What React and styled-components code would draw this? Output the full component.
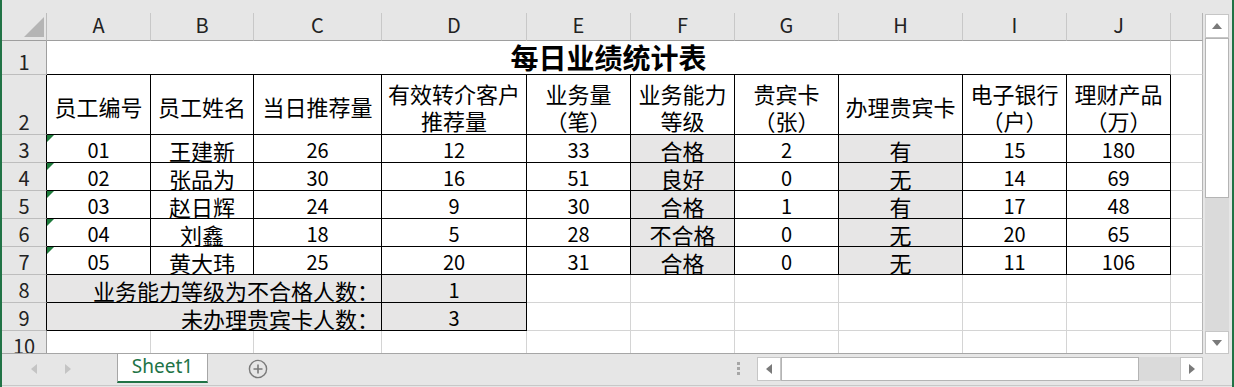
import React from "react";
import styled, { createGlobalStyle, css } from "styled-components";

const GREEN = "#217346";
const GRID = "#d4d4d4";
const FILL = "#e7e6e6";
const BLACK = "#000";
const EDGE = "#b4b4b4";

const GlobalStyle = createGlobalStyle`
  html, body {
    margin: 0;
    padding: 0;
    background: #e6e6e6;
  }
  body {
    font-family: "Noto Sans CJK SC", "Noto Sans", sans-serif;
  }
`;

const Window = styled.div`
  width: 1234px;
  height: 387px;
  box-sizing: border-box;
  border-left: 2px solid ${GREEN};
  border-right: 2px solid ${GREEN};
  background: #e6e6e6;
  display: flex;
  flex-direction: column;
  padding-top: 13px;
  overflow: hidden;
`;

const Main = styled.div`
  display: flex;
`;

const LeftPane = styled.div`
  width: 1201px;
  display: flex;
  flex-direction: column;
`;

const Sheet = styled.div`
  display: grid;
  grid-template-columns: 45px 104px 103px 128px 145px 104px 104px 104px 124px 104px 104px 32px;
  grid-template-rows: 28px 34px 60px repeat(8, 28px);
  height: 340px;
  overflow: hidden;
  background: #fff;
  font-family: "Noto Sans CJK SC", sans-serif;
  color: ${BLACK};
`;

const Corner = styled.div`
  background: #e6e6e6;
  border-right: 1px solid #bcbcbc;
  border-bottom: 1px solid #9e9e9e;
  display: flex;
  justify-content: flex-end;
  align-items: flex-end;
  padding: 0 2px 3px 0;
`;

const ColHead = styled.div`
  background: #e6e6e6;
  border-right: 1px solid ${(p) => p.$edge || "#c8c8c8"};
  border-bottom: 1px solid #9e9e9e;
  display: flex;
  justify-content: center;
  align-items: center;
  padding-bottom: 4px;
  font-size: 20px;
  line-height: 23px;
  color: #222;
`;

const RowHead = styled.div`
  background: #e6e6e6;
  border-right: 1px solid ${(p) => p.$edge};
  border-bottom: 1px solid #bdbdbd;
  display: flex;
  justify-content: center;
  align-items: flex-end;
  font-size: 20px;
  line-height: 24px;
  color: #222;
`;

const Cell = styled.div`
  position: relative;
  grid-column: ${(p) => (p.$span ? `span ${p.$span}` : "auto")};
  background: ${(p) => (p.$fill ? FILL : "#fff")};
  border-right: 1px solid ${(p) => p.$r || GRID};
  border-bottom: 1px solid ${(p) => p.$b || GRID};
  display: flex;
  align-items: flex-end;
  justify-content: ${(p) => (p.$right ? "flex-end" : "center")};
  padding-right: ${(p) => (p.$right ? "2px" : "0")};
  font-size: ${(p) => (p.$num ? "20px" : "22px")};
  line-height: 24px;
  white-space: nowrap;
  ${(p) =>
    p.$flag &&
    css`
      &::before {
        content: "";
        position: absolute;
        top: 0;
        left: 0;
        border-top: 7px solid #1e7b3c;
        border-right: 7px solid transparent;
      }
    `}
`;

const HeadCell = styled(Cell)`
  align-items: center;
  padding-top: 4px;
  line-height: 27px;
  text-align: center;
`;

const TitleCell = styled(Cell)`
  font-size: 28px;
  font-weight: 700;
  line-height: 34px;
`;

const TabBar = styled.div`
  height: 30px;
  box-sizing: border-box;
  border-top: 1px solid #a6a6a6;
  display: flex;
  align-items: stretch;
`;

const Nav = styled.div`
  width: 115px;
  display: flex;
  align-items: center;
  padding-left: 29px;
  gap: 28px;
  box-sizing: border-box;
`;

const Tab = styled.div`
  width: 91px;
  box-sizing: border-box;
  background: #fff;
  border-left: 1px solid #a6a6a6;
  border-right: 1px solid #a6a6a6;
  border-bottom: 2px solid ${GREEN};
  display: flex;
  align-items: center;
  justify-content: center;
  padding-bottom: 4px;
  font-family: "Noto Sans", sans-serif;
  font-size: 19px;
  color: ${GREEN};
`;

const AddBtn = styled.div`
  margin-left: 40px;
  display: flex;
  align-items: center;
`;

const Spacer = styled.div`
  flex: 1;
`;

const Dots = styled.div`
  display: flex;
  flex-direction: column;
  justify-content: center;
  gap: 2px;
  margin-right: 17px;
  span {
    width: 3px;
    height: 3px;
    background: #a6a6a6;
  }
`;

const HScroll = styled.div`
  width: 446px;
  height: 24px;
  align-self: center;
  display: flex;
`;

const ScrollBtn = styled.div`
  width: ${(p) => p.$w || 24}px;
  height: ${(p) => p.$h || 24}px;
  flex: none;
  box-sizing: border-box;
  background: #fff;
  border: 1px solid #c6c6c6;
  display: flex;
  align-items: center;
  justify-content: center;
`;

const Thumb = styled.div`
  flex: none;
  box-sizing: border-box;
  background: #fff;
  border: 1px solid #b4b4b4;
  width: ${(p) => (p.$w ? `${p.$w}px` : "auto")};
  height: ${(p) => (p.$h ? `${p.$h}px` : "auto")};
`;

const Track = styled.div`
  flex: 1;
  background: #dadada;
`;

const VScroll = styled.div`
  width: 29px;
  height: 341px;
  box-sizing: border-box;
  padding: 1px 3px 0 2px;
  display: flex;
  flex-direction: column;
`;

const Arrow = styled.span`
  width: 0;
  height: 0;
  ${(p) =>
    p.$dir === "up" &&
    css`
      border-left: 5px solid transparent;
      border-right: 5px solid transparent;
      border-bottom: 6px solid ${p.$c};
    `}
  ${(p) =>
    p.$dir === "down" &&
    css`
      border-left: 5px solid transparent;
      border-right: 5px solid transparent;
      border-top: 6px solid ${p.$c};
    `}
  ${(p) =>
    p.$dir === "left" &&
    css`
      border-top: 5px solid transparent;
      border-bottom: 5px solid transparent;
      border-right: 6px solid ${p.$c};
    `}
  ${(p) =>
    p.$dir === "right" &&
    css`
      border-top: 5px solid transparent;
      border-bottom: 5px solid transparent;
      border-left: 6px solid ${p.$c};
    `}
`;

const BottomEdge = styled.div`
  height: 2px;
  border-bottom: 1px solid #c8c8c8;
`;

const COLS = ["A", "B", "C", "D", "E", "F", "G", "H", "I", "J"];

const HEADERS = [
  ["员工编号"],
  ["员工姓名"],
  ["当日推荐量"],
  ["有效转介客户", "推荐量"],
  ["业务量", "（笔）"],
  ["业务能力", "等级"],
  ["贵宾卡", "（张）"],
  ["办理贵宾卡"],
  ["电子银行", "（户）"],
  ["理财产品", "（万）"],
];

const ROWS = [
  ["01", "王建新", "26", "12", "33", "合格", "2", "有", "15", "180"],
  ["02", "张品为", "30", "16", "51", "良好", "0", "无", "14", "69"],
  ["03", "赵日辉", "24", "9", "30", "合格", "1", "有", "17", "48"],
  ["04", "刘鑫", "18", "5", "28", "不合格", "0", "无", "20", "65"],
  ["05", "黄大玮", "25", "20", "31", "合格", "0", "无", "11", "106"],
];

const SUMMARY = [
  ["业务能力等级为不合格人数：", "1"],
  ["未办理贵宾卡人数：", "3"],
];

const isNum = (v) => /^\d+$/.test(v);

const CornerMark = () => (
  <svg width="20" height="20" viewBox="0 0 20 20">
    <polygon points="20,0 20,20 0,20" fill="#b5b5b5" />
  </svg>
);

const PlusCircle = () => (
  <svg width="20" height="20" viewBox="0 0 20 20">
    <circle cx="10" cy="10" r="8.6" fill="none" stroke="#7a7a7a" strokeWidth="1.4" />
    <path d="M10 5.5v9M5.5 10h9" stroke="#7a7a7a" strokeWidth="1.6" />
  </svg>
);

const KCell = () => <Cell $r={EDGE} />;

export default function App() {
  return (
    <Window>
      <GlobalStyle />
      <Main>
        <LeftPane>
          <Sheet>
            <Corner>
              <CornerMark />
            </Corner>
            {COLS.map((c) => (
              <ColHead key={c}>{c}</ColHead>
            ))}
            <ColHead $edge={EDGE} />

            <RowHead $edge="#9e9e9e">1</RowHead>
            <TitleCell $span={10} $b={BLACK}>
              每日业绩统计表
            </TitleCell>
            <KCell />

            <RowHead $edge={BLACK}>2</RowHead>
            {HEADERS.map((h, i) => (
              <HeadCell key={i} $r={BLACK} $b={BLACK}>
                {h.length > 1 ? (
                  <span>
                    {h[0]}
                    <br />
                    {h[1]}
                  </span>
                ) : (
                  h[0]
                )}
              </HeadCell>
            ))}
            <KCell />

            {ROWS.map((row, r) => (
              <React.Fragment key={r}>
                <RowHead $edge={BLACK}>{r + 3}</RowHead>
                {row.map((v, i) => (
                  <Cell
                    key={i}
                    $r={BLACK}
                    $b={BLACK}
                    $fill={i === 5 || i === 7}
                    $flag={i === 0}
                    $num={isNum(v)}
                  >
                    {v}
                  </Cell>
                ))}
                <KCell />
              </React.Fragment>
            ))}

            {SUMMARY.map(([label, value], r) => (
              <React.Fragment key={label}>
                <RowHead $edge={BLACK}>{r + 8}</RowHead>
                <Cell $span={3} $right $fill $r={BLACK} $b={BLACK}>
                  {label}
                </Cell>
                <Cell $fill $num $r={BLACK} $b={BLACK}>
                  {value}
                </Cell>
                {COLS.slice(4).map((c) => (
                  <Cell key={c} />
                ))}
                <KCell />
              </React.Fragment>
            ))}

            <RowHead $edge="#9e9e9e">10</RowHead>
            {COLS.map((c) => (
              <Cell key={c} />
            ))}
            <KCell />
          </Sheet>

          <TabBar>
            <Nav>
              <Arrow $dir="left" $c="#c4c4c4" />
              <Arrow $dir="right" $c="#c4c4c4" />
            </Nav>
            <Tab>Sheet1</Tab>
            <AddBtn>
              <PlusCircle />
            </AddBtn>
            <Spacer />
            <Dots>
              <span />
              <span />
              <span />
            </Dots>
            <HScroll>
              <ScrollBtn>
                <Arrow $dir="left" $c="#7a7a7a" />
              </ScrollBtn>
              <Thumb $w={358} />
              <Track />
              <ScrollBtn $w={23}>
                <Arrow $dir="right" $c="#7a7a7a" />
              </ScrollBtn>
            </HScroll>
          </TabBar>
        </LeftPane>

        <VScroll>
          <ScrollBtn>
            <Arrow $dir="up" $c="#7a7a7a" />
          </ScrollBtn>
          <Thumb $h={160} />
          <Track />
          <ScrollBtn $h={23}>
            <Arrow $dir="down" $c="#7a7a7a" />
          </ScrollBtn>
        </VScroll>
      </Main>
      <BottomEdge />
    </Window>
  );
}
